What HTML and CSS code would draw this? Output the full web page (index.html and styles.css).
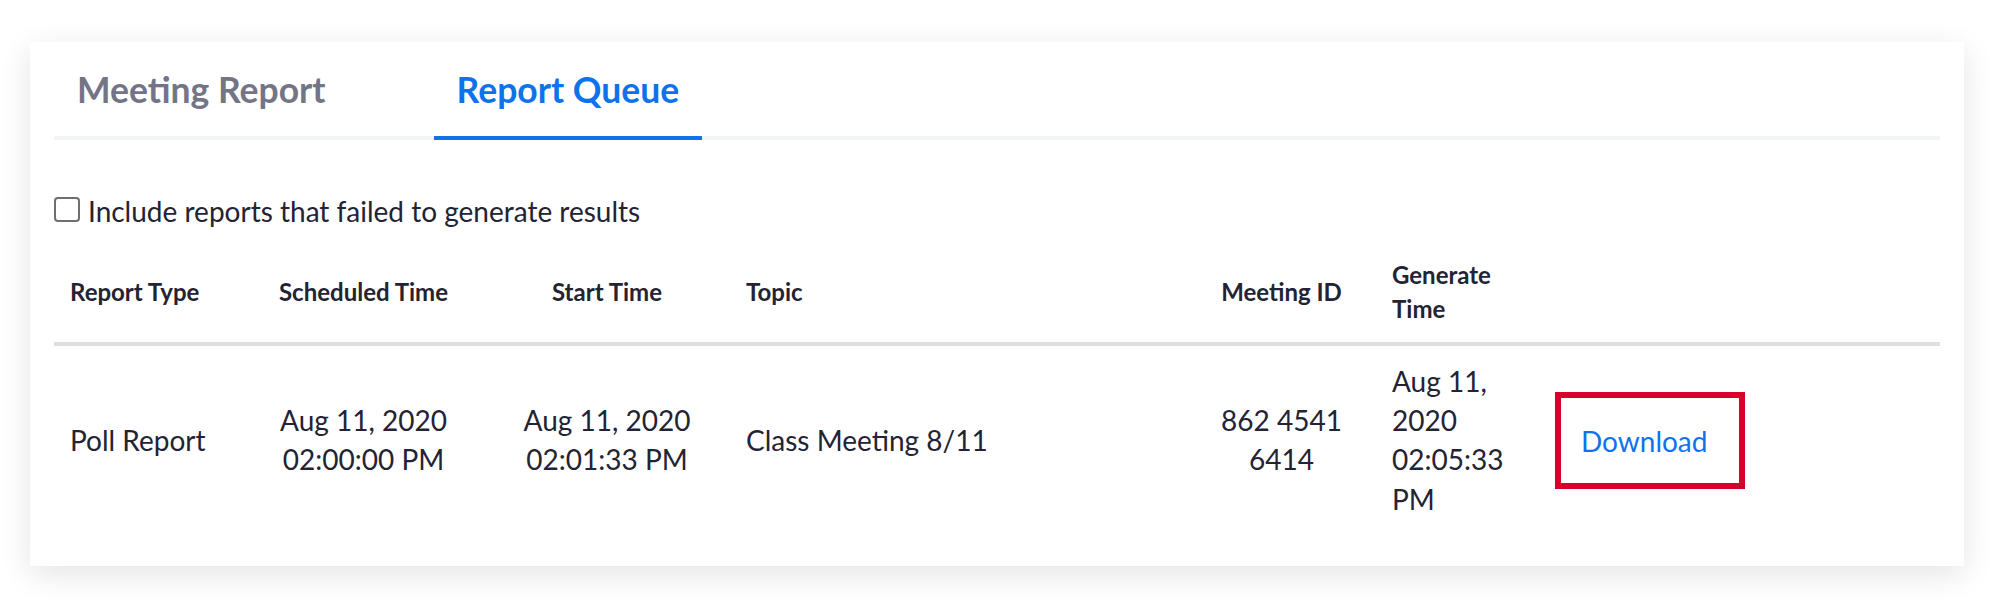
FILE: index.html
```html
<!DOCTYPE html>
<html lang="en">
<head>
<meta charset="utf-8">
<title>Report Queue</title>
<link rel="stylesheet" href="styles.css">
</head>
<body>
<div class="page">
  <section class="card">
    <nav class="tabs">
      <a class="tab">Meeting Report</a>
      <a class="tab tab-active">Report Queue</a>
    </nav>
    <label class="check-row">
      <span class="checkbox"></span>
      <span class="check-label">Include reports that failed to generate results</span>
    </label>
    <table class="queue">
      <colgroup>
        <col class="c-type">
        <col class="c-sched">
        <col class="c-start">
        <col class="c-topic">
        <col class="c-id">
        <col class="c-gen">
        <col class="c-act">
      </colgroup>
      <thead>
        <tr>
          <th class="left">Report Type</th>
          <th class="center">Scheduled Time</th>
          <th class="center">Start Time</th>
          <th class="left">Topic</th>
          <th class="center">Meeting ID</th>
          <th class="left gen">Generate Time</th>
          <th class="left"></th>
        </tr>
      </thead>
      <tbody>
        <tr>
          <td class="left">Poll Report</td>
          <td class="center">Aug 11, 2020 02:00:00 PM</td>
          <td class="center">Aug 11, 2020 02:01:33 PM</td>
          <td class="left">Class Meeting 8/11</td>
          <td class="center">862 4541 6414</td>
          <td class="left gen">Aug 11, 2020 02:05:33 PM</td>
          <td class="left"><span class="highlight"><a class="download">Download</a></span></td>
        </tr>
      </tbody>
    </table>
  </section>
</div>
</body>
</html>
```
FILE: styles.css
```css
html, body {
  margin: 0;
  padding: 0;
  background: #ffffff;
}

body {
  font-family: "Lato", "Liberation Sans", sans-serif;
  color: #232333;
  min-height: 611px;
}

.page {
  padding: 42px 0 45px 30px;
}

.card {
  width: 1934px;
  box-sizing: border-box;
  background: #ffffff;
  padding: 0 24px 31px 24px;
  box-shadow: 0 8px 30px rgba(0, 0, 0, 0.11);
}

/* Tabs */
.tabs {
  display: flex;
  gap: 85px;
  border-bottom: 4px solid #f3f4f6;
}

.tab {
  display: block;
  padding: 26px 23px 24px;
  margin-bottom: -4px;
  border-bottom: 4px solid transparent;
  font-size: 35.5px;
  line-height: 44px;
  font-weight: 700;
  color: #747487;
  cursor: pointer;
}

.tab-active {
  color: #0e72ed;
  border-bottom-color: #0e72ed;
  border-radius: 2px 2px 0 0;
}

/* Checkbox row */
.check-row {
  display: flex;
  align-items: center;
  margin-top: 51px;
  height: 40px;
  gap: 8px;
}

.checkbox {
  width: 26px;
  height: 25px;
  box-sizing: border-box;
  border: 2px solid #6f6f6f;
  border-radius: 4px;
  margin-bottom: 3px;
  background: #ffffff;
}

.check-label {
  font-size: 28px;
  line-height: 40px;
}

/* Table */
.queue {
  width: 100%;
  margin-top: 11px;
  border-collapse: collapse;
  table-layout: fixed;
}

.c-type  { width: 189px; }
.c-sched { width: 241px; }
.c-start { width: 246px; }
.c-topic { width: 457px; }
.c-id    { width: 189px; }
.c-gen   { width: 163px; }

.queue th {
  font-size: 24px;
  line-height: 34px;
  font-weight: 700;
  padding: 16px;
  vertical-align: middle;
  border-bottom: 4px solid #dedede;
}

.queue td {
  font-size: 28px;
  line-height: 1.4;
  padding: 16px;
  vertical-align: middle;
}

.left { text-align: left; }
.center { text-align: center; }

.highlight {
  display: inline-block;
  border: 6px solid #d6002a;
  padding: 24px 32px 22px 20px;
}

.download {
  color: #0e72ed;
  cursor: pointer;
}
```
